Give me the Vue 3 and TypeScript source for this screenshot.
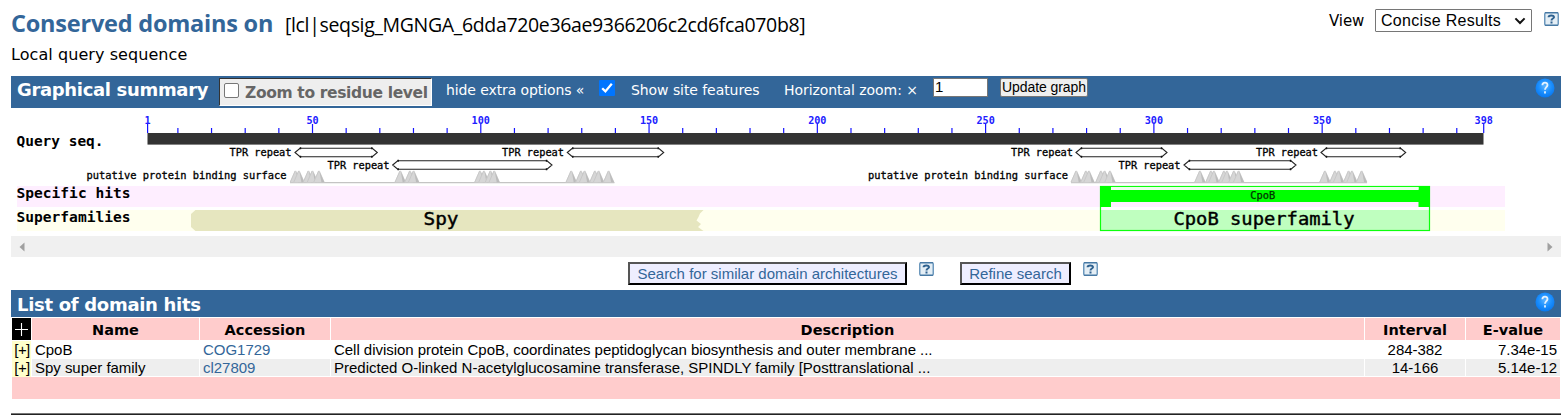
<script setup lang="ts">
interface Repeat { start: number; end: number; row: number; label: number }
interface Site { label: number; from: number; to: number; peaks: number[] }
interface Hit { name: string; accession: string; description: string; interval: string; evalue: string }

const px = (residue: number): number => 147.6 + (residue - 1) * 3.3655
const majors: number[] = [1, 50, 100, 150, 200, 250, 300, 350, 398]
const minors: number[] = Array.from({ length: 39 }, (_, i) => (i + 1) * 10).filter(n => n % 50 !== 0)
const numeralWidth = (n: number): number => String(n).length * 6.1

const repeats: Repeat[] = [
  { start: 295, end: 377.3, row: 152.5, label: 229.5 },
  { start: 392.7, end: 552, row: 165, label: 327.5 },
  { start: 567.3, end: 663.7, row: 152.5, label: 502 },
  { start: 1076, end: 1167, row: 152.5, label: 1011 },
  { start: 1184, end: 1296, row: 165, label: 1118.5 },
  { start: 1321, end: 1405.7, row: 152.5, label: 1256 },
]
const arrow = (r: Repeat): string =>
  `M${r.start} ${r.row}l5-4.2H${r.end - 5}l5 4.2l-5 4.2H${r.start + 5}z`
const studs = (r: Repeat): string =>
  `M${r.start + 5.5} ${r.row - 5.2}v2m0 6.4v2M${r.end - 5.5} ${r.row - 5.2}v2m0 6.4v2`

const sites: Site[] = [
  {
    label: 86.5, from: 290, to: 614.5,
    peaks: [295.5, 299, 308.5, 312.5, 319, 400.3, 410, 413.7, 480, 484, 490.5, 494.3, 571.3, 581, 584.7, 595, 598.7, 608.7],
  },
  {
    label: 868, from: 1071, to: 1367,
    peaks: [1076.3, 1086, 1089, 1101, 1104.7, 1110, 1200, 1211, 1214, 1224, 1227, 1234, 1238.7, 1325, 1335, 1338.7, 1348.7, 1352, 1361.7],
  },
]

const hits: Hit[] = [
  { name: 'CpoB', accession: 'COG1729', description: 'Cell division protein CpoB, coordinates peptidoglycan biosynthesis and outer membrane ...', interval: '284-382', evalue: '7.34e-15' },
  { name: 'Spy super family', accession: 'cl27809', description: 'Predicted O-linked N-acetylglucosamine transferase, SPINDLY family [Posttranslational ...', interval: '14-166', evalue: '5.14e-12' },
]
</script>

<template>
  <div class="page">
    <svg class="defs" width="0" height="0" aria-hidden="true">
      <defs>
        <radialGradient id="ball" cx="50%" cy="40%" r="60%">
          <stop offset="0" stop-color="#5db4ff" />
          <stop offset=".55" stop-color="#1c90ff" />
          <stop offset="1" stop-color="#0878f0" />
        </radialGradient>
        <symbol id="help-square" viewBox="0 0 15 14">
          <rect x=".75" y=".75" width="13.5" height="12.5" rx="1.2" fill="#e4eef5" stroke="#6c98bd" stroke-width="1.5" />
          <path d="M1 .7h13M1 13.3h13" stroke="#3e719d" stroke-width="1" />
          <path d="M4.6 5.2C4.6 3.1 10.1 3 10 5.2C9.9 6.6 7.5 6.5 7.5 8.5M7.5 9.5v1.9" fill="none" stroke="#2e618f" stroke-width="2" />
        </symbol>
        <symbol id="help-ball" viewBox="0 0 20 20">
          <circle cx="10" cy="10" r="9.5" fill="url(#ball)" />
          <path d="M7.4 7.3C7.4 3.6 12.7 3.8 12.5 7.1C12.4 9 10 9.3 10 11.8M10 13.3v2.1" fill="none" stroke="#e5f3ff" stroke-width="1.8" />
        </symbol>
      </defs>
    </svg>

    <header class="top">
      <div>
        <div class="heading">
          <h1>Conserved domains on</h1>
          <span class="query">[lcl|seqsig_MGNGA_6dda720e36ae9366206c2cd6fca070b8]</span>
        </div>
        <p class="sub">Local query sequence</p>
      </div>
      <div class="view">
        <span class="view-label">View</span>
        <div class="select">
          <span>Concise Results</span>
          <svg width="12" height="8" viewBox="0 0 12 8"><path d="M1.4 1.4L6 6l4.6-4.6" fill="none" stroke="#111" stroke-width="2" /></svg>
        </div>
        <svg class="hs" width="15" height="14"><use href="#help-square" /></svg>
      </div>
    </header>

    <section class="bar summary">
      <h2>Graphical summary</h2>
      <div class="residue"><i class="check" /><span>Zoom to residue level</span></div>
      <span class="extra">hide extra options «</span>
      <svg class="checked" width="16" height="16" viewBox="0 0 16 16">
        <rect width="16" height="16" rx="1" fill="#0075ff" />
        <path d="M3.2 8.2l3.2 3.2L12.8 3.8" fill="none" stroke="#fff" stroke-width="2.3" />
      </svg>
      <span class="features">Show site features</span>
      <span class="zoom">Horizontal zoom: ×</span>
      <div class="field">1</div>
      <div class="update">Update graph</div>
      <svg class="ball" width="20" height="20"><use href="#help-ball" /></svg>
    </section>

    <svg class="graph" width="1550" height="128" viewBox="11 108 1550 128">
      <rect x="17" y="186" width="1488" height="21" fill="#feeeff" />
      <rect x="17" y="210" width="1488" height="21" fill="#ffffee" />

      <g stroke="#1414ff" stroke-width="1.2">
        <line v-for="n in minors" :key="n" :x1="px(n)" :x2="px(n)" y1="128" y2="133" />
        <line v-for="n in majors" :key="n" :x1="px(n)" :x2="px(n)" y1="124" y2="133" />
      </g>
      <g class="mono numerals">
        <text v-for="n in majors" :key="n" :x="px(n) - numeralWidth(n) / 2" y="123.6" :textLength="numeralWidth(n)" lengthAdjust="spacingAndGlyphs">{{ n }}</text>
      </g>
      <rect x="147.5" y="133" width="1336" height="11.6" fill="#333" />

      <g class="mono row-name">
        <text x="16.5" y="146" textLength="87" lengthAdjust="spacingAndGlyphs">Query seq.</text>
        <text x="16.5" y="198.2" textLength="114" lengthAdjust="spacingAndGlyphs">Specific hits</text>
        <text x="16.5" y="222.2" textLength="114" lengthAdjust="spacingAndGlyphs">Superfamilies</text>
      </g>

      <g v-for="r in repeats" :key="r.start">
        <text class="mono small" :x="r.label" :y="r.row + 3.5" textLength="62" lengthAdjust="spacingAndGlyphs">TPR repeat</text>
        <path :d="arrow(r)" fill="#fff" stroke="#222" stroke-width="1.1" />
        <path :d="studs(r)" stroke="#111" stroke-width="1.4" />
      </g>

      <g v-for="s in sites" :key="s.label">
        <text class="mono small" :x="s.label" y="179.4" textLength="200" lengthAdjust="spacingAndGlyphs">putative protein binding surface</text>
        <line :x1="s.from" :x2="s.to" y1="182.6" y2="182.6" stroke="#c4c4c4" stroke-width="1.1" />
        <g v-for="p in s.peaks" :key="p">
          <path :d="`M${p - 5.7} 182.2L${p - .7} 170.8h1.4L${p + 5.7} 182.2z`" fill="#d6d6d6" />
          <path :d="`M${p - 5.2} 182L${p - .4} 171`" stroke="#c4c4c4" stroke-width=".8" />
          <path :d="`M${p + .4} 171L${p + 5.4} 182.2h-3z`" fill="#bcbcbc" />
        </g>
      </g>

      <path d="M195.5 210H703.5L700 213.5L698.5 217L696.5 220.5L701 224L698 227L703.5 231H195.5L191 227V214z" fill="#e6e6bf" />
      <text class="mono family" x="423.5" y="225" textLength="35" lengthAdjust="spacingAndGlyphs">Spy</text>

      <rect x="1101" y="207" width="328" height="3" fill="#fff" />
      <rect x="1101" y="210" width="328" height="20" fill="#bfffbf" />
      <rect x="1100.5" y="186.5" width="329" height="44" fill="none" stroke="#0cff0c" stroke-width="1.2" />
      <path d="M1100 186h11v4h307.5v-4h11.5v21h-11.5v-5H1111v5h-11z" fill="#00ff00" />
      <rect x="1111" y="187" width="307.5" height="2.5" fill="#eaffea" />
      <text class="mono hit" x="1250.3" y="199.3" textLength="25" lengthAdjust="spacingAndGlyphs">CpoB</text>
      <text class="mono family" x="1173.5" y="225" textLength="181" lengthAdjust="spacingAndGlyphs">CpoB superfamily</text>
    </svg>

    <div class="scroll">
      <svg width="6" height="10" viewBox="0 0 6 10"><path d="M5.5 .5v9L.5 5z" fill="#a0a0a0" /></svg>
      <svg width="6" height="10" viewBox="0 0 6 10"><path d="M.5 .5v9L5.5 5z" fill="#a0a0a0" /></svg>
    </div>

    <div class="actions">
      <div class="action arch">Search for similar domain architectures</div>
      <svg width="15" height="14"><use href="#help-square" /></svg>
      <div class="action refine">Refine search</div>
      <svg width="15" height="14"><use href="#help-square" /></svg>
    </div>

    <section class="bar list">
      <h2>List of domain hits</h2>
      <svg class="ball" width="20" height="20"><use href="#help-ball" /></svg>
    </section>

    <div class="table">
      <div class="tr head">
        <div class="plus"><svg width="13" height="13" viewBox="0 0 13 13"><path d="M6.5 0v13M0 6.5h13" stroke="#fff" stroke-width="1.1" /></svg></div>
        <div>Name</div><div>Accession</div><div>Description</div><div>Interval</div><div>E-value</div>
      </div>
      <div v-for="h in hits" :key="h.accession" class="tr row">
        <div class="open">[+]</div>
        <div>{{ h.name }}</div>
        <div class="acc">{{ h.accession }}</div>
        <div class="desc">{{ h.description }}</div>
        <div class="interval">{{ h.interval }}</div>
        <div class="evalue">{{ h.evalue }}</div>
      </div>
      <div class="foot" />
    </div>
    <div class="rule" />
  </div>
</template>

<style>
html, body { margin: 0; background: #fff; overflow: hidden; }
</style>

<style scoped>
.page { box-sizing: border-box; width: 1568px; height: 416px; padding: 0 7px 0 11px; overflow: hidden; color: #000; font-family: "Liberation Sans", Arial, sans-serif; white-space: nowrap; display: flex; flex-direction: column; }
.page > * { flex-shrink: 0; }
.defs { display: block; }
svg { display: block; flex-shrink: 0; }
h1, h2, p { margin: 0; }
.top { height: 76px; display: flex; justify-content: space-between; }
.heading { display: flex; align-items: baseline; height: 40px; padding-top: 5px; box-sizing: border-box; line-height: 36px; }
h1 { width: 274px; font: 700 23.5px/36px "Open Sans", sans-serif; color: #336699; letter-spacing: -.22px; }
.query { font: 400 19.5px/36px "Open Sans", sans-serif; letter-spacing: -.35px; }
.sub { font: 16px/24px "DejaVu Sans", sans-serif; padding-top: 3px; letter-spacing: .07px; }
.view { display: flex; align-items: flex-start; padding-top: 9px; margin-right: 2px; }
.view-label { font: 15px/24px "DejaVu Sans", sans-serif; width: 46px; letter-spacing: -.1px; }
.select { box-sizing: border-box; width: 157px; height: 23px; border: 1px solid #767676; border-radius: 1px; padding: 0 5px 0 5px; display: flex; align-items: center; justify-content: space-between; font-size: 16px; letter-spacing: .3px; }
.hs { margin: 3px 0 0 12px; }
.bar { background: #336699; color: #fff; display: flex; position: relative; }
.bar h2 { font: 700 18px/28px "DejaVu Sans", sans-serif; padding-left: 6px; }
.summary { height: 32px; align-items: flex-start; font: 14px/28px "DejaVu Sans", sans-serif; }
.summary h2 { width: 202px; letter-spacing: -.33px; }
.residue { box-sizing: border-box; width: 213px; height: 28px; margin-top: 2px; background: #eee; border: 1px solid; border-color: #333 #fff #fff #333; display: flex; align-items: center; color: #666; font: 700 15.5px/26px "DejaVu Sans", sans-serif; letter-spacing: -.35px; }
.residue span { padding-top: 2px; }
.check { box-sizing: border-box; width: 15px; height: 15px; margin: -4px 6px 0 4px; border: 1px solid #777; border-radius: 2px; background: #fff; }
.extra { width: 153px; margin-left: 14px; letter-spacing: -.1px; }
.checked { margin-top: 4px; }
.features { margin-left: 16px; width: 153px; letter-spacing: -.07px; }
.zoom { width: 149px; letter-spacing: -.06px; }
.field { box-sizing: border-box; width: 55px; height: 19px; margin-top: 2px; background: #fff; border: 1px solid #767676; color: #000; padding-left: 1px; font: 15px/16px "Liberation Sans", sans-serif; }
.update { box-sizing: border-box; width: 88px; height: 19px; margin: 2px 0 0 12px; background: #efefef; border: 1px solid #767676; border-radius: 2px; color: #000; text-align: center; font: 14px/17px "Liberation Sans", sans-serif; letter-spacing: -.08px; }
.ball { position: absolute; right: 6px; top: 2px; }
.mono { font-family: "DejaVu Sans Mono", monospace; }
.numerals { font-size: 10px; font-weight: 700; fill: #2020ff; }
.row-name { font-size: 14px; font-weight: 700; }
.small { font-size: 10px; stroke: #000; stroke-width: .3px; }
.family { font-size: 17px; stroke: #000; stroke-width: .4px; }
.hit { font-size: 10px; fill: #003000; stroke: #003000; stroke-width: .25px; }
.scroll { height: 21px; background: #f0f0f0; display: flex; align-items: center; justify-content: space-between; padding: 0 8px; }
.actions { height: 33px; box-sizing: border-box; padding: 5px 0 0 617px; display: flex; align-items: flex-start; }
.action { box-sizing: border-box; height: 23px; border: 2px solid; border-color: #555 #000 #000 #555; background: #eeeeff; color: #336699; text-align: center; font-size: 15px; line-height: 20px; }
.arch { width: 279px; margin-right: 12px; }
.refine { width: 111px; margin: 0 12px 0 26px; }
.list { height: 27px; }
.list h2 { line-height: 29px; letter-spacing: -.3px; }
.table { padding: 1px 1px 0; font-size: 15px; }
.tr { display: grid; grid-template-columns: 19px 167px 130px 1033px 100px 94px; column-gap: 1px; }
.head { height: 22px; margin-bottom: 1px; }
.head > div { height: 22px; background: #ffcccc; text-align: center; font: 700 14.5px/24px "DejaVu Sans", sans-serif; }
.head > .plus { background: #000; display: grid; place-items: center; }
.row { height: 18px; line-height: 18px; }
.row > div { padding: 0 3px; height: 17px; letter-spacing: -.03px; }
.row:nth-child(3) > div { background: #eee; }
.row:nth-child(3) > .desc { letter-spacing: 0; }
.row > .open, .row:nth-child(3) > .open { background: #ffffcc; height: 18px; padding: 0 0 0 1px; text-align: center; letter-spacing: -.6px; }
.acc { color: #336699; }
.interval { text-align: center; }
.evalue { text-align: right; }
.foot { height: 22px; background: #ffcccc; }
.rule { margin-top: 14px; height: 1px; background: #222; border-top: 1px solid #777; }
</style>
